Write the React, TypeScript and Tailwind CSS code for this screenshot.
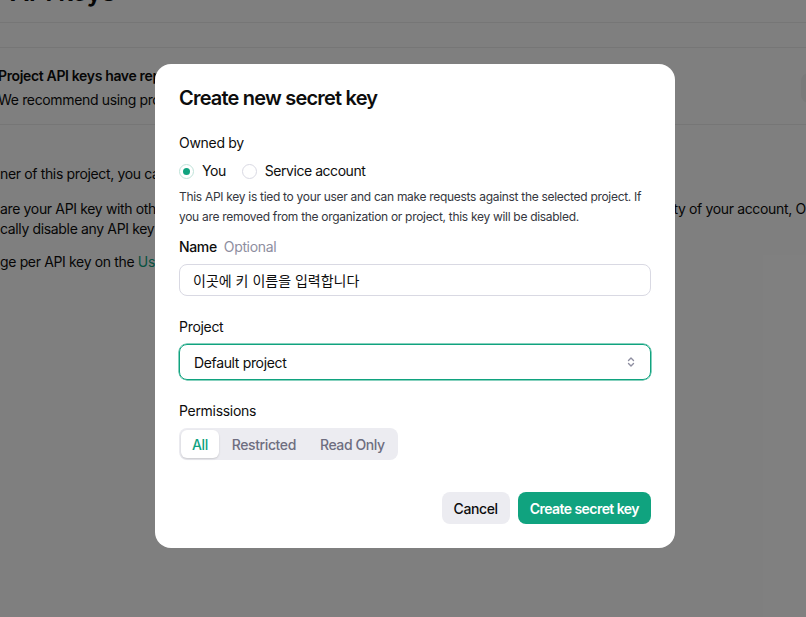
import { useState } from "react";

const permissions = ["All", "Restricted", "Read Only"];

function Radio({ checked, label, onClick }: { checked: boolean; label: string; onClick: () => void }) {
  return (
    <button type="button" onClick={onClick} className="flex items-center gap-[8px]">
      <span
        className={
          "flex h-[15px] w-[15px] items-center justify-center rounded-full border " +
          (checked ? "border-[#bfe3d9] bg-white" : "border-[#d9d9e3] bg-white")
        }
      >
        {checked && <span className="h-[7px] w-[7px] rounded-full bg-[#10a37f]" />}
      </span>
      <span className="text-[14px] leading-5 tracking-[-0.45px] text-[#0d0d0d]">{label}</span>
    </button>
  );
}

export default function App() {
  const [owner, setOwner] = useState("you");
  const [perm, setPerm] = useState("All");

  return (
    <div className="relative h-[617px] w-[806px] overflow-hidden bg-white font-['Inter','Noto_Sans_CJK_KR',sans-serif] text-[#0d0d0d]">
      {/* page behind the dialog */}
      <div className="flex flex-col text-[14px] tracking-[-0.35px]">
        <div className="-mt-[23px] -ml-[4px] text-[26px] font-semibold leading-[30px] whitespace-nowrap">· API keys</div>
        <div className="mt-[15px] border-t border-[#ececec]" />
        <div className="mt-[24px] border-t border-[#ececec]" />
        <div className="flex items-center justify-between pb-[12px] pt-[16px]">
          <div className="-ml-[2px] w-[170px] overflow-hidden whitespace-nowrap">
            <div className="font-semibold leading-6">Project API keys have replaced</div>
            <div className="leading-6">We recommend using project</div>
          </div>
          <div className="-mr-[40px] rounded-lg bg-[#f4f4f4] px-[7px] py-[5px] leading-[20px]">View</div>
        </div>
        <div className="border-t border-[#ececec]" />
        <div className="mt-[39px] w-[170px] overflow-hidden whitespace-nowrap leading-5">ner of this project, you can view</div>
        <div className="mt-[15px] flex justify-between whitespace-nowrap leading-5">
          <span className="w-[170px] overflow-hidden">are your API key with others</span>
          <span className="-mr-[8px]">ty of your account, Op</span>
        </div>
        <div className="w-[170px] overflow-hidden whitespace-nowrap leading-5">cally disable any API key that</div>
        <div className="mt-[13px] w-[170px] overflow-hidden whitespace-nowrap leading-5">
          ge per API key on the <span className="text-[#10a37f]">Usage page</span>
        </div>
      </div>

      {/* overlay + dialog */}
      <div className="absolute inset-0 bg-black/50">
        <div className="ml-[155px] mt-[64px] w-[520px] rounded-2xl bg-white px-6 pb-6 pt-5">
          <h2 className="text-[20px] font-semibold leading-7 tracking-[-0.8px] text-[#0d0d0d]">Create new secret key</h2>

          <div className="mt-[21px] text-[14px] leading-5 tracking-[-0.3px]">Owned by</div>
          <div className="mt-2 flex items-center gap-[16px]">
            <Radio checked={owner === "you"} label="You" onClick={() => setOwner("you")} />
            <Radio checked={owner === "service"} label="Service account" onClick={() => setOwner("service")} />
          </div>
          <p className="mt-[6px] text-[12px] leading-5 tracking-[-0.3px] text-[#353740]">
            This API key is tied to your user and can make requests against the selected project. If you are removed from the organization or project, this key will be disabled.
          </p>

          <div className="mt-[10px] flex gap-[7px] text-[14px] leading-5 tracking-[-0.35px]">
            <span className="font-medium">Name</span>
            <span className="text-[#8e8ea0]">Optional</span>
          </div>
          <input
            className="mt-[7px] h-8 w-full rounded-lg border border-[#d9d9e3] px-[13px] text-[14px] text-[#0d0d0d] outline-none"
            defaultValue="이곳에 키 이름을 입력합니다"
          />

          <div className="mt-[21px] text-[14px] leading-5 tracking-[-0.3px]">Project</div>
          <div className="mt-[7px] flex h-9 w-full items-center justify-between rounded-lg border border-[#10a37f] px-[14px] shadow-[0_0_0_0.5px_#10a37f]">
            <span className="text-[14px] tracking-[-0.35px] text-[#0d0d0d]">Default project</span>
            <svg width="10" height="12" viewBox="0 0 10 12" fill="none" stroke="#8e8ea0" strokeWidth="1.4" strokeLinecap="round" strokeLinejoin="round">
              <path d="M2.5 4.5 5 2l2.5 2.5" />
              <path d="M2.5 7.5 5 10l2.5-2.5" />
            </svg>
          </div>

          <div className="mt-[21px] text-[14px] leading-5 tracking-[-0.3px]">Permissions</div>
          <div className="mt-[7px] inline-flex h-8 items-center gap-[2px] rounded-lg bg-[#ececf1] p-[2px]">
            {permissions.map((p) => (
              <button
                key={p}
                type="button"
                onClick={() => setPerm(p)}
                className={
                  "h-7 rounded-md px-[11px] text-[14px] font-medium tracking-[-0.4px] " +
                  (perm === p ? "bg-white text-[#10a37f] shadow-[0_1px_2px_rgba(0,0,0,0.15)]" : "text-[#6e6e80]")
                }
              >
                {p}
              </button>
            ))}
          </div>

          <div className="mt-8 flex justify-end gap-2">
            <button type="button" className="h-8 rounded-lg bg-[#ececf1] px-[12px] text-[14px] font-medium tracking-[-0.4px] text-[#0d0d0d]">
              Cancel
            </button>
            <button type="button" className="h-8 rounded-lg bg-[#10a37f] px-3 text-[14px] font-semibold tracking-[-0.55px] text-white">
              Create secret key
            </button>
          </div>
        </div>
      </div>
    </div>
  );
}
